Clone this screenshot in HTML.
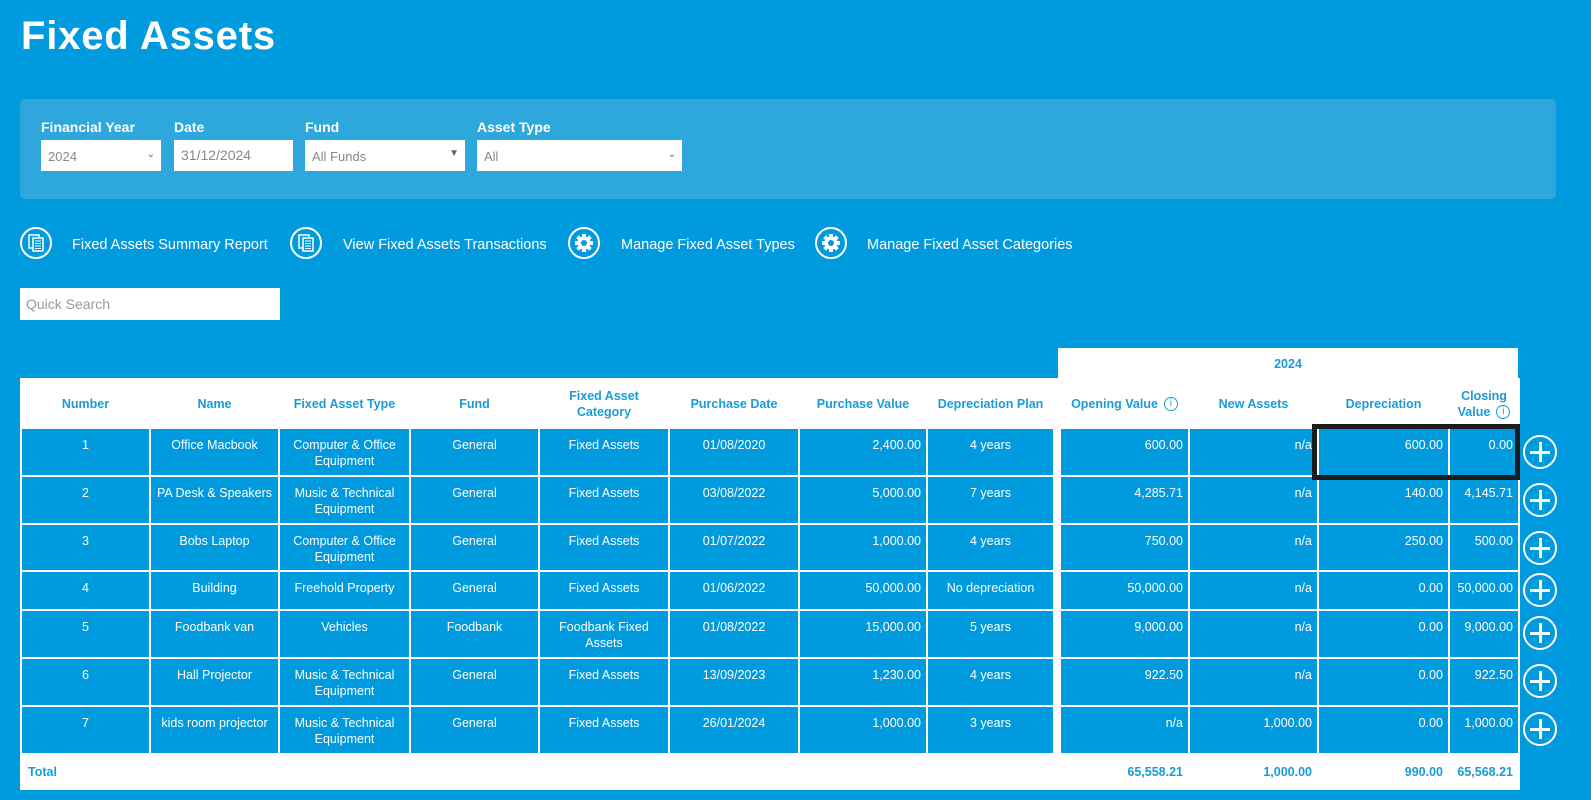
<!DOCTYPE html>
<html><head><meta charset="utf-8"><style>
*{margin:0;padding:0;box-sizing:border-box}
body{width:1591px;height:800px;background:#009bde;font-family:"Liberation Sans",sans-serif;position:relative;overflow:hidden;color:#fff}
.a{position:absolute}
h1{position:absolute;left:21px;top:14px;font-size:40px;font-weight:bold;letter-spacing:0.8px;color:#fff}
.panel{left:20px;top:99px;width:1536px;height:100px;background:#2ea7dd;border-radius:4px}
.lbl{font-size:14px;font-weight:bold;top:119px}
.inp{top:140px;height:31px;background:#fff;color:#888;font-size:13px;padding:9px 0 0 7px}
.car{position:absolute;right:6px;top:9px;font-size:10px;color:#666}
.ic{width:32px;height:32px;border:2px solid #fff;border-radius:50%;top:227px;display:flex;align-items:center;justify-content:center}
.lt{top:237px;font-size:14.5px}
table{position:absolute;left:20px;top:378px;width:1498px;border-collapse:collapse;table-layout:fixed;background:#009bde}
td,th{border:2px solid #fff;font-size:12.5px;vertical-align:top;line-height:16px}
th{background:#fff;color:#1a9bd7;font-weight:bold;height:49px;vertical-align:middle;text-align:center}
td{padding-top:8px;text-align:center;color:#fff}
td.r{text-align:right;padding-right:5px}
.g{border-left:8px solid #fff}
tr.t td{background:#fff;color:#1a9bd7;font-weight:bold;height:35px;vertical-align:middle;padding-top:0}
.plus{left:1523px;width:34px;height:34px;border:2px solid #fff;border-radius:50%}
.plus:before{content:"";position:absolute;left:5px;top:14px;width:20px;height:3px;background:#fff}
.plus:after{content:"";position:absolute;left:13.5px;top:5px;width:3px;height:20px;background:#fff}
.info{display:inline-block;width:14px;height:14px;border:1.5px solid #1a9bd7;border-radius:50%;font-size:10px;line-height:11px;text-align:center;vertical-align:middle;margin-left:6px;font-weight:normal}
</style></head><body>
<h1>Fixed Assets</h1>
<div class="a panel"></div>
<div class="a lbl" style="left:41px">Financial Year</div>
<div class="a lbl" style="left:174px">Date</div>
<div class="a lbl" style="left:305px">Fund</div>
<div class="a lbl" style="left:477px">Asset Type</div>
<div class="a inp" style="left:41px;width:120px">2024<span class="car">&#8964;</span></div>
<div class="a inp" style="left:174px;width:119px;font-size:14px;padding-top:7px">31/12/2024</div>
<div class="a inp" style="left:305px;width:160px">All Funds<span class="car" style="top:8px">&#9660;</span></div>
<div class="a inp" style="left:477px;width:205px">All<span class="car">&#8964;</span></div>

<div class="a ic" style="left:20px"><svg width="16" height="18" viewBox="0 0 16 18"><rect x="1" y="1" width="10" height="13" fill="none" stroke="#fff" stroke-width="1.5"/><rect x="5" y="4" width="10" height="13" fill="#009bde" stroke="#fff" stroke-width="1.5"/><path d="M7 7h6M7 9.5h6M7 12h6M7 14.5h6" stroke="#fff"/></svg></div>
<div class="a lt" style="left:72px">Fixed Assets Summary Report</div>
<div class="a ic" style="left:290px"><svg width="16" height="18" viewBox="0 0 16 18"><rect x="1" y="1" width="10" height="13" fill="none" stroke="#fff" stroke-width="1.5"/><rect x="5" y="4" width="10" height="13" fill="#009bde" stroke="#fff" stroke-width="1.5"/><path d="M7 7h6M7 9.5h6M7 12h6M7 14.5h6" stroke="#fff"/></svg></div>
<div class="a lt" style="left:343px">View Fixed Assets Transactions</div>
<div class="a ic" style="left:568px"><svg width="20" height="20" viewBox="0 0 20 20"><g fill="#fff"><circle cx="10" cy="10" r="6.5"/><rect x="8" y="1" width="4" height="18"/><rect x="8" y="1" width="4" height="18" transform="rotate(45 10 10)"/><rect x="8" y="1" width="4" height="18" transform="rotate(90 10 10)"/><rect x="8" y="1" width="4" height="18" transform="rotate(135 10 10)"/></g><circle cx="10" cy="10" r="3" fill="#009bde"/></svg></div>
<div class="a lt" style="left:621px">Manage Fixed Asset Types</div>
<div class="a ic" style="left:815px"><svg width="20" height="20" viewBox="0 0 20 20"><g fill="#fff"><circle cx="10" cy="10" r="6.5"/><rect x="8" y="1" width="4" height="18"/><rect x="8" y="1" width="4" height="18" transform="rotate(45 10 10)"/><rect x="8" y="1" width="4" height="18" transform="rotate(90 10 10)"/><rect x="8" y="1" width="4" height="18" transform="rotate(135 10 10)"/></g><circle cx="10" cy="10" r="3" fill="#009bde"/></svg></div>
<div class="a lt" style="left:867px">Manage Fixed Asset Categories</div>

<div class="a" style="left:20px;top:288px;width:260px;height:32px;background:#fff;color:#999;font-size:14px;padding:8px 0 0 6px">Quick Search</div>

<div class="a" style="left:1058px;top:348px;width:460px;height:31px;background:#fff;color:#1a9bd7;font-weight:bold;font-size:12.5px;text-align:center;padding-top:9px">2024</div>

<table>
<colgroup><col style="width:129px"><col style="width:129px"><col style="width:131px"><col style="width:129px"><col style="width:130px"><col style="width:130px"><col style="width:128px"><col style="width:130px"><col style="width:132px"><col style="width:129px"><col style="width:131px"><col style="width:70px"></colgroup>
<tr><th>Number</th><th>Name</th><th>Fixed Asset Type</th><th>Fund</th><th>Fixed Asset<br>Category</th><th>Purchase Date</th><th>Purchase Value</th><th>Depreciation Plan</th><th class="g">Opening Value<span class="info">i</span></th><th>New Assets</th><th>Depreciation</th><th>Closing<br>Value<span class="info">i</span></th></tr>
<tr style="height:48px"><td>1</td><td>Office Macbook</td><td>Computer &amp; Office Equipment</td><td>General</td><td>Fixed Assets</td><td>01/08/2020</td><td class="r">2,400.00</td><td>4 years</td><td class="r g">600.00</td><td class="r">n/a</td><td class="r">600.00</td><td class="r">0.00</td></tr>
<tr style="height:48px"><td>2</td><td>PA Desk &amp; Speakers</td><td>Music &amp; Technical Equipment</td><td>General</td><td>Fixed Assets</td><td>03/08/2022</td><td class="r">5,000.00</td><td>7 years</td><td class="r g">4,285.71</td><td class="r">n/a</td><td class="r">140.00</td><td class="r">4,145.71</td></tr>
<tr style="height:47px"><td>3</td><td>Bobs Laptop</td><td>Computer &amp; Office Equipment</td><td>General</td><td>Fixed Assets</td><td>01/07/2022</td><td class="r">1,000.00</td><td>4 years</td><td class="r g">750.00</td><td class="r">n/a</td><td class="r">250.00</td><td class="r">500.00</td></tr>
<tr style="height:39px"><td>4</td><td>Building</td><td>Freehold Property</td><td>General</td><td>Fixed Assets</td><td>01/06/2022</td><td class="r">50,000.00</td><td>No depreciation</td><td class="r g">50,000.00</td><td class="r">n/a</td><td class="r">0.00</td><td class="r">50,000.00</td></tr>
<tr style="height:48px"><td>5</td><td>Foodbank van</td><td>Vehicles</td><td>Foodbank</td><td>Foodbank Fixed Assets</td><td>01/08/2022</td><td class="r">15,000.00</td><td>5 years</td><td class="r g">9,000.00</td><td class="r">n/a</td><td class="r">0.00</td><td class="r">9,000.00</td></tr>
<tr style="height:48px"><td>6</td><td>Hall Projector</td><td>Music &amp; Technical Equipment</td><td>General</td><td>Fixed Assets</td><td>13/09/2023</td><td class="r">1,230.00</td><td>4 years</td><td class="r g">922.50</td><td class="r">n/a</td><td class="r">0.00</td><td class="r">922.50</td></tr>
<tr style="height:48px"><td>7</td><td>kids room projector</td><td>Music &amp; Technical Equipment</td><td>General</td><td>Fixed Assets</td><td>26/01/2024</td><td class="r">1,000.00</td><td>3 years</td><td class="r g">n/a</td><td class="r">1,000.00</td><td class="r">0.00</td><td class="r">1,000.00</td></tr>
<tr class="t"><td style="text-align:left;padding-left:6px;border-right:none">Total</td><td colspan="7" style="border-left:none"></td><td class="r">65,558.21</td><td class="r">1,000.00</td><td class="r">990.00</td><td class="r">65,568.21</td></tr>
</table>

<div class="a" style="left:1312px;top:424px;width:208px;height:56px;border:5px solid #1b1b1b"></div>

<div class="a plus" style="top:435px"></div>
<div class="a plus" style="top:483px"></div>
<div class="a plus" style="top:531px"></div>
<div class="a plus" style="top:573px"></div>
<div class="a plus" style="top:616px"></div>
<div class="a plus" style="top:664px"></div>
<div class="a plus" style="top:712px"></div>
</body></html>
